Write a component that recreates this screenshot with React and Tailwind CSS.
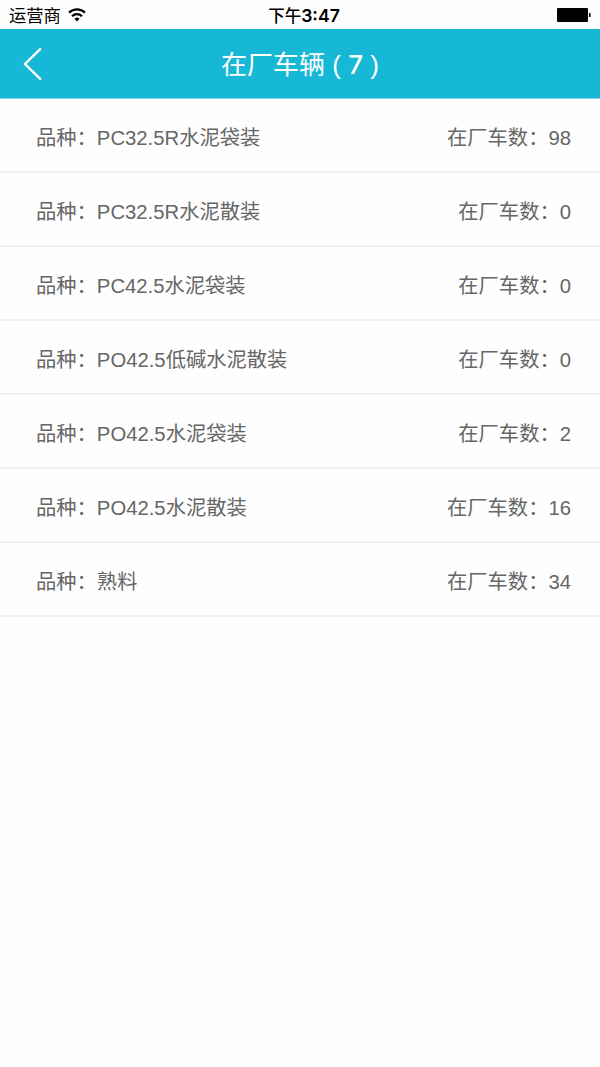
const rows = [
  { name: 'PC32.5R水泥袋装', count: 98 },
  { name: 'PC32.5R水泥散装', count: 0 },
  { name: 'PC42.5水泥袋装', count: 0 },
  { name: 'PO42.5低碱水泥散装', count: 0 },
  { name: 'PO42.5水泥袋装', count: 2 },
  { name: 'PO42.5水泥散装', count: 16 },
  { name: '熟料', count: 34 },
];

function StatusBar() {
  return (
    <div className="grid h-[29px] grid-cols-3 items-center bg-[#fefefe] pl-[9px] pr-[9px] text-[17.3px] text-black">
      <div className="flex items-center gap-[7px]">
        <span className="pt-1">运营商</span>
        <svg width="18" height="14" viewBox="0 0 18 14" fill="none" stroke="currentColor" strokeWidth="2.2">
          <path d="M1 4.6a11.5 11.5 0 0 1 16 0" />
          <path d="M4 8.2a7.2 7.2 0 0 1 10 0" />
          <path d="M9 13.4 6.5 10.8a3.6 3.6 0 0 1 5 0Z" fill="currentColor" stroke="none" />
        </svg>
      </div>
      <span className="whitespace-nowrap pl-2 pt-[2px] text-center font-['Inter','Noto_Sans_CJK_SC',sans-serif] text-[16.5px] font-medium">
        下午<span className="text-[17.6px] font-semibold">3:47</span>
      </span>
      <svg className="justify-self-end" width="35" height="14" viewBox="0 0 35 14">
        <rect x="1" width="31" height="14" rx="1" />
        <rect x="33" y="5" width="1.6" height="4" rx="0.5" />
      </svg>
    </div>
  );
}

export default function App() {
  return (
    <main className="min-h-[1067px] w-[600px] bg-[#fefefe] font-['Liberation_Sans','Noto_Sans_CJK_SC',sans-serif]">
      <StatusBar />
      <header className="grid h-[70px] grid-cols-[60px_1fr_60px] items-center border-b border-[#7fd8e9] bg-[#17b8d6] text-white">
        <svg className="ml-[22px]" width="22" height="34" viewBox="0 0 22 34" fill="none" stroke="currentColor" strokeWidth="2.4" strokeLinecap="round">
          <path d="M18.2 2.2 3 17l15.2 14.8" />
        </svg>
        <h1 className="pt-[2px] text-center text-[26px]">
          在厂车辆 ( <span className="font-['Inter',sans-serif] font-medium">7</span> )
        </h1>
      </header>
      <ul className="text-[20.3px] text-[#666]">
        {rows.map((row) => (
          <li key={row.name} className="flex h-[74px] items-center justify-between border-b-2 border-[#eef0f2] pl-[36px] pr-[29px] pt-[7px]">
            <span>品种：{row.name}</span>
            <span>在厂车数：{row.count}</span>
          </li>
        ))}
      </ul>
    </main>
  );
}
